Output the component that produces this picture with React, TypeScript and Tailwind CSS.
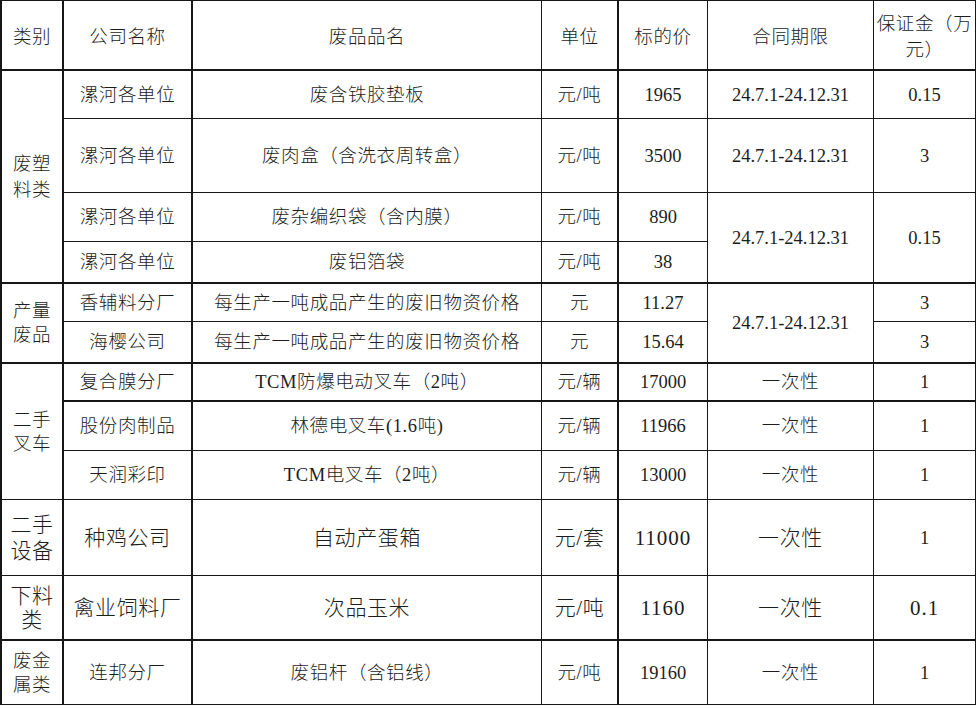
import type { ReactNode } from "react";

type CellProps = {
  children?: ReactNode;
  r2?: boolean;
  b2?: boolean;
  num?: boolean;
  big?: boolean;
  className?: string;
};

function Cell({ children, r2, b2, num, big, className = "" }: CellProps) {
  const right = r2 ? "border-r-2" : "border-r";
  const bottom = b2 ? "border-b-2" : "border-b";
  const size = big ? "text-[21px] leading-[24px]" : "text-[18.5px] leading-[24px]";
  const track = num ? (big ? "tracking-[1px]" : "tracking-normal") : "tracking-[0.6px]";
  return (
    <div
      className={`flex items-center justify-center text-center border-[#161616] ${right} ${bottom} ${size} ${track} ${className}`}
    >
      <span>{children}</span>
    </div>
  );
}

const PERIOD = "24.7.1-24.12.31";

export default function App() {
  return (
    <div className="min-h-screen bg-white font-['Liberation_Serif','Noto_Sans_CJK_SC',serif] font-light text-[#1c1c1c]">
      <div className="grid w-fit grid-cols-[62px_129px_349px_77px_89px_166px_102px] grid-rows-[70px_48px_74px_49px_42px_38px_42px_38px_49px_49px_76px_65px_64px] border-l-2 border-t border-[#161616]">
        {/* header */}
        <Cell r2 b2 className="pt-1">类别</Cell>
        <Cell r2 b2 className="pt-1">公司名称</Cell>
        <Cell b2 className="pt-1">废品品名</Cell>
        <Cell r2 b2 className="pt-1">单位</Cell>
        <Cell b2 className="pt-1">标的价</Cell>
        <Cell b2 className="pt-1">合同期限</Cell>
        <Cell b2 className="pt-1 leading-[26px]">
          保证金（万
          <br />
          元）
        </Cell>

        {/* 废塑料类 */}
        <Cell r2 b2 className="row-span-4 leading-[26px]">
          废塑
          <br />
          料类
        </Cell>
        <Cell r2>漯河各单位</Cell>
        <Cell>废含铁胶垫板</Cell>
        <Cell r2>元/吨</Cell>
        <Cell num>1965</Cell>
        <Cell num>{PERIOD}</Cell>
        <Cell num>0.15</Cell>

        <Cell r2>漯河各单位</Cell>
        <Cell>废肉盒（含洗衣周转盒）</Cell>
        <Cell r2>元/吨</Cell>
        <Cell num>3500</Cell>
        <Cell num>{PERIOD}</Cell>
        <Cell num>3</Cell>

        <Cell r2>漯河各单位</Cell>
        <Cell>废杂编织袋（含内膜）</Cell>
        <Cell r2>元/吨</Cell>
        <Cell num>890</Cell>
        <Cell num b2 className="row-span-2">{PERIOD}</Cell>
        <Cell num b2 className="row-span-2">0.15</Cell>

        <Cell r2 b2>漯河各单位</Cell>
        <Cell b2>废铝箔袋</Cell>
        <Cell r2 b2>元/吨</Cell>
        <Cell num b2>38</Cell>

        {/* 产量废品 */}
        <Cell r2 b2 className="row-span-2">
          产量
          <br />
          废品
        </Cell>
        <Cell r2>香辅料分厂</Cell>
        <Cell>每生产一吨成品产生的废旧物资价格</Cell>
        <Cell r2>元</Cell>
        <Cell num>11.27</Cell>
        <Cell num b2 className="row-span-2">{PERIOD}</Cell>
        <Cell num>3</Cell>

        <Cell r2 b2>海樱公司</Cell>
        <Cell b2>每生产一吨成品产生的废旧物资价格</Cell>
        <Cell r2 b2>元</Cell>
        <Cell num b2>15.64</Cell>
        <Cell num b2>3</Cell>

        {/* 二手叉车 */}
        <Cell r2 className="row-span-3">
          二手
          <br />
          叉车
        </Cell>
        <Cell r2 b2>复合膜分厂</Cell>
        <Cell b2>TCM防爆电动叉车（2吨）</Cell>
        <Cell r2 b2>元/辆</Cell>
        <Cell num b2>17000</Cell>
        <Cell b2>一次性</Cell>
        <Cell num b2>1</Cell>

        <Cell r2>股份肉制品</Cell>
        <Cell>林德电叉车(1.6吨)</Cell>
        <Cell r2>元/辆</Cell>
        <Cell num>11966</Cell>
        <Cell>一次性</Cell>
        <Cell num>1</Cell>

        <Cell r2>天润彩印</Cell>
        <Cell>TCM电叉车（2吨）</Cell>
        <Cell r2>元/辆</Cell>
        <Cell num>13000</Cell>
        <Cell>一次性</Cell>
        <Cell num>1</Cell>

        {/* 二手设备 */}
        <Cell r2 big className="leading-[26px]">
          二手
          <br />
          设备
        </Cell>
        <Cell r2 big>种鸡公司</Cell>
        <Cell big>自动产蛋箱</Cell>
        <Cell r2 big>元/套</Cell>
        <Cell num big>11000</Cell>
        <Cell big>一次性</Cell>
        <Cell num>1</Cell>

        {/* 下料类 */}
        <Cell r2 b2 big>
          下料
          <br />
          类
        </Cell>
        <Cell r2 b2 big>禽业饲料厂</Cell>
        <Cell b2 big>次品玉米</Cell>
        <Cell r2 b2 big>元/吨</Cell>
        <Cell num b2 big>1160</Cell>
        <Cell b2 big>一次性</Cell>
        <Cell num b2 big>0.1</Cell>

        {/* 废金属类 */}
        <Cell r2 className="leading-[22px]">
          废金
          <br />
          属类
        </Cell>
        <Cell r2>连邦分厂</Cell>
        <Cell>废铝杆（含铝线）</Cell>
        <Cell r2>元/吨</Cell>
        <Cell num>19160</Cell>
        <Cell>一次性</Cell>
        <Cell num>1</Cell>
      </div>
    </div>
  );
}
